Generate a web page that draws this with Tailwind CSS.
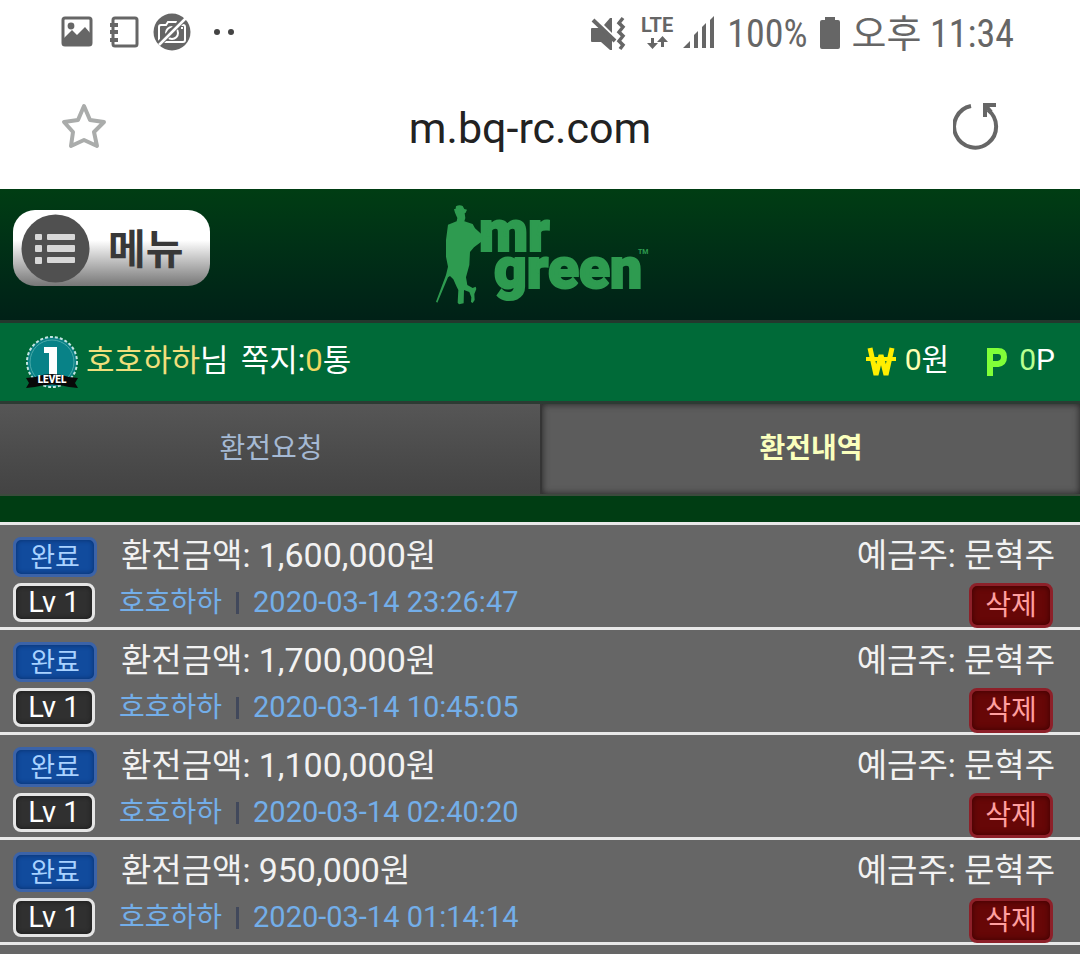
<!DOCTYPE html>
<html lang="ko">
<head>
    <meta charset="UTF-8">
    <meta name="viewport" content="width=device-width, initial-scale=1.0">
    <title>환전내역</title>
    <script src="https://cdn.jsdelivr.net/npm/@tailwindcss/browser@4"></script>
</head>
<body class="min-h-screen flex flex-col bg-[#666666] font-['Roboto','Noto_Sans_CJK_KR',sans-serif] leading-none overflow-hidden">
    <!-- Phone status bar -->
    <div class="flex items-center h-[68px] bg-white text-[#666666] pl-[61px] pr-[66px]">
        <div class="flex items-center gap-[14px] pb-1">
            <svg class="w-8 h-8" viewBox="0 0 32 32" fill="none">
                <rect x="2" y="2" width="28" height="27" rx="2" stroke="#666" stroke-width="3"/>
                <circle cx="10" cy="10" r="3.4" fill="#666"/>
                <path d="M2 23l9-9 5 5 8-8 6 7v11H2z" fill="#666"/>
            </svg>
            <svg class="w-8 h-8" viewBox="0 0 32 32" fill="none" stroke="#666" stroke-width="3">
                <rect x="6" y="2" width="24" height="28" rx="2"/>
                <path d="M3 9h8M3 16h8M3 24h8" stroke-width="4"/>
            </svg>
            <svg class="w-[38px] h-[38px]" viewBox="0 0 38 38" fill="none" stroke="#fff" stroke-width="2">
                <circle cx="19" cy="19" r="18.5" fill="#666" stroke="none"/>
                <path d="M8 12h5l2-3h8l2 3h5q2 0 2 2v13q0 2-2 2H8q-2 0-2-2V14q0-2 2-2z"/>
                <circle cx="19" cy="20" r="6"/>
                <path d="M28 15h2"/>
                <path d="M6 31L31 6" stroke="#666" stroke-width="6"/>
                <path d="M6 32L33 5" stroke-width="2.500"/>
            </svg>
            <svg class="w-6 h-8 ml-2" viewBox="0 0 24 32" fill="#444">
                <circle cx="4" cy="16" r="3"/><circle cx="18" cy="16" r="3"/>
            </svg>
        </div>
        <div class="flex items-center ml-auto">
            <svg class="w-9 h-9" viewBox="0 0 36 36" fill="#666">
                <path d="M1 12h8l12 11v11h-2l-9-8H1q-1 0-1-1V13q0-1 1-1z"/>
                <path d="M13 9l6-7h2v15z"/>
                <path d="M2 4l22 21" stroke="#666" stroke-width="4"/>
                <path d="M32 2l-4 5 4 4-4 5 4 4-4 5 4 4-3 4" fill="none" stroke="#666" stroke-width="3.500"/>
            </svg>
            <svg class="w-9 h-9 ml-[14px] overflow-visible" viewBox="0 0 36 36" fill="#666">
                <text x="0" y="16" font-family="Roboto" font-weight="700" font-size="20">LTE</text>
                <path d="M10 22h3v5h4l-5.500 6-5.500-6h4zM20 31h3v-5h4l-5.500-6-5.500 6h4z"/>
            </svg>
            <svg class="w-9 h-9 ml-[6px]" viewBox="0 0 36 36" fill="#666">
                <path d="M0 32l7-7v7zM11 19l4-4v17h-4zM19 11l4-4v25h-4zM27 4l4-4v32h-4z"/>
            </svg>
            <span class="ml-2 text-[38px] font-['Roboto_Condensed','Liberation_Sans_Narrow','Noto_Sans_CJK_KR',sans-serif]">100%</span>
            <svg class="w-[22px] h-9 mb-[3px] ml-3" viewBox="0 0 22 36" fill="#666">
                <path d="M6 2h10v3h3q2 0 2 2v25q0 2-2 2H3q-2 0-2-2V7q0-2 2-2h3z"/>
            </svg>
            <span class="ml-[10px] text-[38px] font-['Roboto_Condensed','Liberation_Sans_Narrow','Noto_Sans_CJK_KR',sans-serif] whitespace-nowrap">오후 11:34</span>
        </div>
    </div>

    <!-- Browser address bar -->
    <div class="flex items-center justify-between h-[121px] bg-white pl-[61px] pr-[79px]">
        <button class="mb-[5px]" aria-label="Bookmark">
            <svg class="w-[46px] h-[46px]" viewBox="0 0 46 46" fill="none" stroke="#aaacab" stroke-width="4" stroke-linejoin="round">
                <path d="M23 3l6 14 14 2-10 10 3 14-13-6-13 6 2-14L3 19l14-2z"/>
            </svg>
        </button>
        <span class="text-[43px] text-[#222222]">m.bq-rc.com</span>
        <button class="mb-[5px]" aria-label="Reload">
            <svg class="w-[48px] h-[48px]" viewBox="0 0 48 48" fill="none" stroke="#666" stroke-width="4">
                <path d="M18 4A21 21 0 1 0 35 8"/>
                <path d="M43 3H32v12M33 4l5 6"/>
            </svg>
        </button>
    </div>

    <!-- Site header -->
    <header class="grid grid-cols-[1fr_auto_1fr] items-start h-[134px] pl-[13px] pr-[7px] border-b-3 border-[#24372d] bg-linear-to-b from-[#003d13] to-[#002117]">
        <button class="flex items-center gap-[18px] w-[197px] h-[76px] mt-[21px] pl-[8px] rounded-[22px] bg-linear-to-b from-white from-40% to-[#777777] text-[41px] font-bold text-[#383838]">
            <svg class="w-[69px] h-[69px]" viewBox="0 0 69 69">
                <circle cx="34.500" cy="34.500" r="34" fill="#505050"/>
                <g fill="#d8d8d8">
                    <rect x="14" y="20" width="7" height="6" rx="1"/><rect x="26" y="20" width="28" height="6" rx="1"/>
                    <rect x="14" y="31" width="7" height="7" rx="1"/><rect x="26" y="31" width="28" height="7" rx="1"/>
                    <rect x="14" y="43" width="7" height="7" rx="1"/><rect x="26" y="43" width="28" height="6" rx="1"/>
                </g>
            </svg>
            <span class="pt-1">메뉴</span>
        </button>
        <a href="#" aria-label="mr green" class="mt-[15px]">
            <svg class="w-[214px] h-[104px] overflow-visible" viewBox="0 0 214 104" fill="#2e9b50">
                <path transform="translate(-16 -14) scale(.3333)" d="M105 68L102 58 107 56 108 49Q118 43 128 48L133 57 141 59 137 68 134 70 136 84 133 94 158 102 165 115 184 132V155L162 172 150 186 148 225 138 262 142 285 158 294 167 290 169 297 163 312 164 330 158 339 153 336 154 322 148 306 132 300 131 340 117 343 113 338 115 300 110 290 100 268 90 258 84 262 52 338 48 335 78 255 84 230 78 200V150L84 104 110 94 112 84z"/>
                <g font-family="Roboto" font-weight="900" font-size="57" stroke="#2e9b50" stroke-width="2">
                    <text x="43" y="47">mr</text>
                    <text x="58" y="84">green</text>
                </g>
                <text x="202" y="50" font-family="Roboto" font-weight="700" font-size="7">TM</text>
            </svg>
        </a>
    </header>

    <!-- Member info -->
    <section class="flex items-center h-[81px] pl-[25px] pr-[25px] pb-1 border-b-3 border-[#2c3b33] bg-[#006a38] text-[30px] text-white">
        <svg class="w-[54px] h-[54px] mt-1" viewBox="0 0 54 54">
            <circle cx="27" cy="27" r="25" fill="#0b8085" stroke="#c4e5e2" stroke-width="2" stroke-dasharray="3 2"/>
            <circle cx="27" cy="27" r="22" fill="#088287" stroke="#4baaa9" stroke-width="1"/>
            <path d="M19 12h13v28h-8V18h-5z" fill="#fff"/>
            <path d="M1 43l9-1q17-6 34 0l9 1-3 5 3 5-9-1q-17-5-34 0l-9 1 3-5z" fill="#080808"/>
            <text x="27" y="48" text-anchor="middle" font-family="Roboto" font-weight="900" font-size="10" fill="#fff">LEVEL</text>
        </svg>
        <span class="ml-[7px] text-[31px]"><span class="text-[#f0df7c]">호호하하</span>님</span>
        <span class="ml-3 text-[31px]">쪽지:<span class="text-[#f0d860]">0</span>통</span>
        <svg class="w-8 h-8 mt-1 ml-auto" viewBox="0 0 32 32" fill="none" stroke="#ffee00" stroke-linejoin="bevel">
            <path d="M5 2l6 27 5-20 5 20 6-27" stroke-width="5"/>
            <path d="M1 13h30" stroke-width="4"/>
        </svg>
        <span class="ml-2"><span class="text-[#ffffb0]">0</span>원</span>
        <svg class="w-6 h-8 mt-1 ml-9" viewBox="0 0 24 32" fill="none" stroke="#80ff38" stroke-width="6">
            <path d="M5 30V5h8q6 0 6 6t-6 7H5"/>
        </svg>
        <span class="ml-[10px]"><span class="text-[#b8ff90]">0</span>P</span>
    </section>

    <nav class="grid grid-cols-2 h-[92px] border-b-2 border-[#3c4a3d] text-[28px]">
        <a href="#" class="flex items-center justify-center pl-[2px] bg-linear-to-b from-[#565656] to-[#434343] text-[#a5b9d3]">환전요청</a>
        <a href="#" class="flex items-center justify-center border-l-2 border-[#353535] bg-[#5c5c5c] inset-shadow-[0_0_7px_#222222] text-[#faffbd] font-bold">환전내역</a>
    </nav>
    <div class="h-[26px] bg-[#003d13]"></div>

    <!-- Exchange history -->
    <ul id="historyList" class="border-b-3 border-[#e8e8e8]"></ul>

    <script>
        const records = [
            { amount: '1,600,000', date: '2020-03-14 23:26:47' },
            { amount: '1,700,000', date: '2020-03-14 10:45:05' },
            { amount: '1,100,000', date: '2020-03-14 02:40:20' },
            { amount: '950,000', date: '2020-03-14 01:14:14' }
        ];

        document.getElementById('historyList').innerHTML = records.map(row => `
            <li class="h-[105px] border-t-3 border-[#e8e8e8] pl-[13px] pr-[25px] pt-3 text-[#f2f2f2]">
                <div class="flex items-center h-[39px] text-[33px]">
                    <span class="flex items-center justify-center w-[84px] h-[40px] pt-[3px] rounded-lg border-3 border-[#3b63a8] bg-[#114b9d] inset-shadow-[0_0_5px_#082e6a] text-[27px] text-[#a9d2ff]">완료</span>
                    <span class="ml-6 pb-[3px]">환전금액: <span class="text-[34px]">${row.amount}</span>원</span>
                    <span class="ml-auto pb-[2px]">예금주: 문혁주</span>
                </div>
                <div class="flex items-start h-[39px] mt-[7px]">
                    <span class="flex items-center justify-center w-[82px] h-[39px] rounded-lg border-3 border-[#e5e5e5] bg-[#303030] inset-shadow-[0_0_5px_#181818] text-[29px] text-white">Lv 1</span>
                    <span class="flex items-center h-[39px] ml-6 text-[28px] text-[#73aee9]">호호하하<span class="w-[3px] h-[22px] mx-[14px] bg-[#41485b]"></span><span class="text-[29px]">${row.date}</span></span>
                    <button class="flex items-center justify-center w-[84px] h-[45px] ml-auto mr-[2px] rounded-lg border-3 border-[#8d2029] bg-[#670707] inset-shadow-[0_0_6px_#390000] text-[28px] text-[#ff9f9f]">삭제</button>
                </div>
            </li>
        `).join('');
    </script>
</body>
</html>
